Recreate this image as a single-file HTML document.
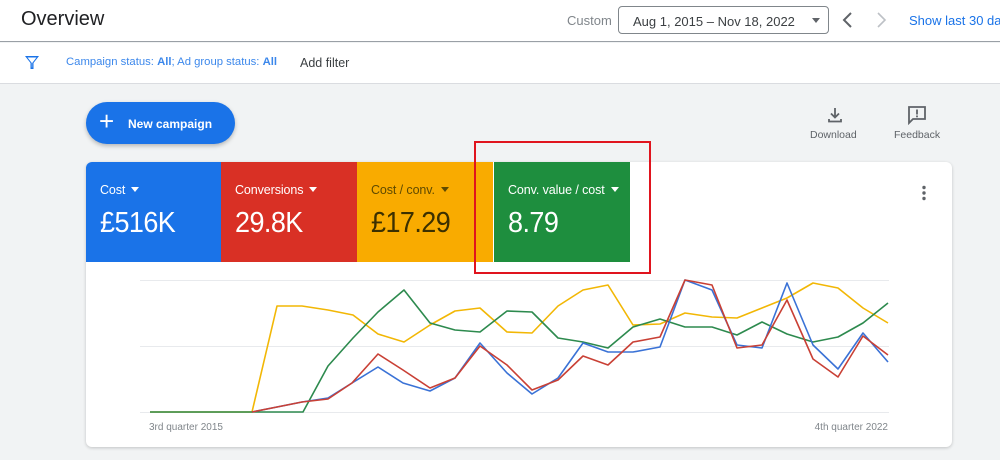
<!DOCTYPE html>
<html><head><meta charset="utf-8"><style>
*{margin:0;padding:0;box-sizing:border-box}
body{width:1000px;height:460px;overflow:hidden;background:#f1f3f4;font-family:"Liberation Sans",Arial,sans-serif;position:relative}
.abs{position:absolute}
.top{left:0;top:0;width:1000px;height:42px;background:#fff;border-bottom:1px solid #9aa0a6}
.filt{left:0;top:43px;width:1000px;height:41px;background:#fff;border-bottom:1px solid #dadce0}
.card{left:86px;top:162px;width:866px;height:285px;background:#fff;border-radius:6px;box-shadow:0 1px 3px rgba(0,0,0,.2)}
.tile{top:162px;height:100px;color:#fff}
.tile .l{position:absolute;left:14px;top:21px;font-size:12.5px;letter-spacing:-0.1px}
.tile .v{position:absolute;left:14px;top:45px;font-size:29px;letter-spacing:-0.6px;transform:scaleX(0.93);transform-origin:left}
.tri{display:inline-block;width:0;height:0;border-left:4px solid transparent;border-right:4px solid transparent;border-top:5px solid currentColor;margin-left:6px;vertical-align:2px}
</style></head><body>
<div class="abs top"></div>
<div class="abs" style="left:21px;top:8px;font-size:20px;color:#202124">Overview</div>
<div class="abs" style="left:567px;top:13px;font-size:13px;color:#80868b">Custom</div>
<div class="abs" style="left:618px;top:6px;width:211px;height:28px;border:1px solid #80868b;border-radius:4px;font-size:13px;color:#3c4043;padding:7px 0 0 14px">Aug 1, 2015 – Nov 18, 2022<span class="tri" style="position:absolute;right:8px;top:11px;color:#5f6368"></span></div>
<svg class="abs" style="left:838px;top:10px" width="60" height="20"><path d="M13 3 L6 10 L13 17" stroke="#5f6368" stroke-width="2" fill="none"/><path d="M40 3 L47 10 L40 17" stroke="#bdc1c6" stroke-width="1.6" fill="none"/></svg>
<div class="abs" style="left:909px;top:13px;font-size:13px;color:#1a73e8;white-space:nowrap">Show last 30 days</div>
<div class="abs filt"></div>
<svg class="abs" style="left:24px;top:55px" width="16" height="16"><path d="M1 1 H15 L9.5 8 V14 H6.5 V8 Z M3.5 2.5 L7.8 8 V12.5 H8.2 V8 L12.5 2.5 Z" fill="#1a73e8" fill-rule="evenodd"/></svg>
<div class="abs" style="left:66px;top:56px;font-size:11.3px;color:#1a73e8;opacity:.85">Campaign status: <b>All</b>; Ad group status: <b>All</b></div>
<div class="abs" style="left:300px;top:56px;font-size:12.5px;color:#3c4043">Add filter</div>
<div class="abs" style="left:86px;top:102px;width:149px;height:42px;border-radius:21px;background:#1a73e8;box-shadow:0 2px 4px rgba(0,0,0,.25);color:#fff;font-size:12px;font-weight:bold"><span style="position:absolute;left:13px;top:5px;font-size:26px;font-weight:normal;line-height:28px">+</span><span style="position:absolute;left:42px;top:15px">New campaign</span></div>
<svg class="abs" style="left:825px;top:105px" width="20" height="20"><path d="M10 3 V12 M6 8.5 L10 12.5 L14 8.5 M4 14 V16.5 H16 V14" stroke="#5f6368" stroke-width="1.8" fill="none"/></svg>
<div class="abs" style="left:810px;top:129px;font-size:10.5px;color:#5f6368">Download</div>
<svg class="abs" style="left:907px;top:105px" width="20" height="20"><path d="M2 2 H18 V14 H6 L2 18 Z" stroke="#5f6368" stroke-width="1.8" fill="none"/><rect x="9.1" y="4.5" width="1.8" height="5" fill="#5f6368"/><rect x="9.1" y="10.5" width="1.8" height="1.8" fill="#5f6368"/></svg>
<div class="abs" style="left:894px;top:129px;font-size:10.5px;color:#5f6368">Feedback</div>
<div class="abs card"></div>
<div class="abs tile" style="left:86px;width:135px;background:#1a73e8;border-top-left-radius:6px"><div class="l">Cost<span class="tri"></span></div><div class="v">£516K</div></div>
<div class="abs tile" style="left:221px;width:136px;background:#d93025"><div class="l">Conversions<span class="tri"></span></div><div class="v">29.8K</div></div>
<div class="abs tile" style="left:357px;width:136px;background:#f9ab00;color:#5f4a00"><div class="l">Cost / conv.<span class="tri"></span></div><div class="v" style="color:#3c3000">£17.29</div></div>
<div class="abs tile" style="left:494px;width:136px;background:#1e8e3e"><div class="l">Conv. value / cost<span class="tri"></span></div><div class="v">8.79</div></div>
<div class="abs" style="left:474px;top:141px;width:177px;height:133px;border:2px solid #e0141e"></div>
<svg class="abs" style="left:918px;top:185px" width="12" height="16"><circle cx="6" cy="2.5" r="1.7" fill="#5f6368"/><circle cx="6" cy="8" r="1.7" fill="#5f6368"/><circle cx="6" cy="13.5" r="1.7" fill="#5f6368"/></svg>
<svg class="abs" style="left:0;top:0" width="1000" height="460">
<g stroke="#e8eaed" stroke-width="1"><line x1="140" y1="280.5" x2="889" y2="280.5"/><line x1="140" y1="346.5" x2="889" y2="346.5"/><line x1="140" y1="412.5" x2="889" y2="412.5"/></g>
<g fill="none" stroke-width="1.6" stroke-linejoin="round">
<polyline stroke="#f2b705" points="150,412 252,412 277,306 302,306 328,310 353,315 378,334 404,342 430,325 455,311 480,308 507,332 532,333 558,306 583,290 608,285 633,325 660,324 685,313 712,317 737,318 762,308 787,298 813,283 838,288 863,308 888,323"/>
<polyline stroke="#2d8a4e" points="150,412 303,412 328,366 353,338 378,312 404,290 430,323 455,330 480,332 507,311 532,312 558,338 583,342 608,348 633,327 660,319 685,327 712,327 737,335 762,322 787,334 813,342 838,337 863,323 888,303"/>
<polyline stroke="#3a72d6" points="252,412 277,407 302,402 328,398 352,383 378,367 403,383 430,391 455,378 480,343 507,373 532,394 558,378 583,343 608,352 633,352 660,347 685,280 712,290 737,345 762,348 787,283 813,345 838,369 863,333 888,362"/>
<polyline stroke="#c94035" points="252,412 277,407 302,402 328,399 352,383 378,354 403,370 430,388 455,378 480,346 507,365 532,390 558,380 583,356 608,365 633,342 660,337 685,280 712,285 737,348 762,345 787,300 813,359 838,377 863,336 888,355"/>
</g>
<text x="149" y="430" font-size="10" fill="#80868b" font-family="Liberation Sans">3rd quarter 2015</text>
<text x="888" y="430" font-size="10" fill="#80868b" text-anchor="end" font-family="Liberation Sans">4th quarter 2022</text>
</svg>
</body></html>
